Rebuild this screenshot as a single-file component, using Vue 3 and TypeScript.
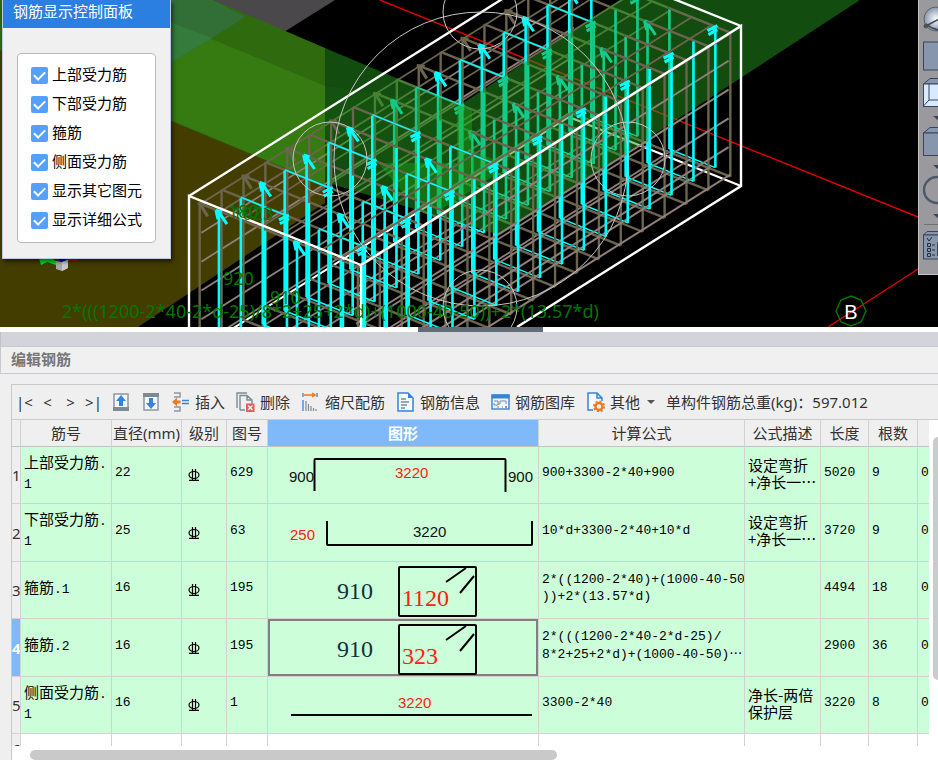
<script setup lang="ts">
import { ref } from 'vue'

interface Seg { x1: number; y1: number; x2: number; y2: number }
interface Layer { taupe: Seg[]; cyan: Seg[]; thin: Seg[]; hooks: string[]; grayHooks: string[]; knots: string[] }

const options = ref([
  { label: '上部受力筋', on: true },
  { label: '下部受力筋', on: true },
  { label: '箍筋', on: true },
  { label: '侧面受力筋', on: true },
  { label: '显示其它图元', on: true },
  { label: '显示详细公式', on: true },
])

/* Projection of the beam: u runs along it, v across it, h is the drop from the top face. */
function pt(u: number, v: number, h: number): [number, number] {
  return [189 + 380 * u + 172 * v, 196 - 239 * u + 69 * v + h]
}
function seg(a: [number, number], b: [number, number]): Seg {
  return { x1: a[0], y1: a[1], x2: b[0], y2: b[1] }
}

const TOP = 7
const BOTTOM = 151
const FRAMES = 18
const OUTER = [0.04, 0.96]
const INNER = [[0.152, 0.42], [0.606, 0.873]]
const station = (i: number) => 0.01 + (i * 0.98) / (FRAMES - 1)

function emptyLayer(): Layer {
  return { taupe: [], cyan: [], thin: [], hooks: [], grayHooks: [], knots: [] }
}
const far = emptyLayer()
const near = emptyLayer()

for (let i = 0; i < FRAMES; i++) {
  const u = station(i)
  const pick = (v: number) => (i >= 8 && v < 0.65 ? far : near)
  for (const v of OUTER) pick(v).taupe.push(seg(pt(u, v, TOP), pt(u, v, BOTTOM)))
  pick(0.04).taupe.push(seg(pt(u, 0.04, TOP), pt(u, 0.6, TOP)))
  near.taupe.push(seg(pt(u, 0.6, TOP), pt(u, 0.96, TOP)))
  pick(0.04).taupe.push(seg(pt(u, 0.04, BOTTOM), pt(u, 0.6, BOTTOM)))
  near.taupe.push(seg(pt(u, 0.6, BOTTOM), pt(u, 0.96, BOTTOM)))
  for (const [a, b] of INNER) {
    pick(a).cyan.push(seg(pt(u, a, TOP + 1), pt(u, a, BOTTOM - 3)))
    pick(b).cyan.push(seg(pt(u, b, TOP + 1), pt(u, b, BOTTOM - 3)))
    pick(a).thin.push(seg(pt(u, a, BOTTOM - 3), pt(u, b, BOTTOM - 3)))
    if (i % 2 === 0) {
      const [x, y] = pt(u, a, TOP + 1)
      pick(a).hooks.push(`M${x - 3} ${y - 2}l2 9M${x - 3} ${y - 2}l6 2M${x} ${y}l8 12`)
    } else {
      pick(a).thin.push(seg(pt(u, a, TOP), pt(u, b, TOP)))
      const [x, y] = pt(u, b, TOP + 1)
      pick(b).knots.push(`M${x - 8} ${y + 3}l10 -5M${x - 7} ${y + 7}l9 -5M${x - 3} ${y - 1}l3 5`)
    }
  }
  if (i % 2 === 0) {
    const [x, y] = pt(u, 0.04, TOP)
    pick(0.04).grayHooks.push(`M${x - 2} ${y}l8 1M${x} ${y}l8 13`)
  }
}

const farBars: Seg[] = []
const nearBars: Seg[] = []
const topBars: Seg[] = []
for (let k = 0; k < 9; k++) {
  const v = 0.04 + k * 0.115
  topBars.push(seg(pt(0.01, v, TOP + 1), pt(0.99, v, TOP + 1)))
  const target = k < 6 ? farBars : nearBars
  target.push(seg(pt(0.01, v, BOTTOM - 2), pt(0.99, v, BOTTOM - 2)))
}
for (let k = 1; k <= 4; k++) {
  const h = TOP + (k * (BOTTOM - TOP)) / 5
  farBars.push(seg(pt(0.01, 0.05, h), pt(0.99, 0.05, h)))
  nearBars.push(seg(pt(0.01, 0.95, h), pt(0.99, 0.95, h)))
}

const orbitKnobs = [[480, 12], [330, 159], [628, 159], [480, 307]]

interface Row {
  name: string; no: string; dia: string; fig: string; shape: string; span: string
  formula: string[]; more?: boolean; desc: string[]; len: string; count: string
}
const rows: Row[] = [
  { name: '上部受力筋', no: '1', dia: '22', fig: '629', shape: 'down', span: '3220', formula: ['900+3300-2*40+900'], desc: ['设定弯折', '+净长一…'], len: '5020', count: '9' },
  { name: '下部受力筋', no: '1', dia: '25', fig: '63', shape: 'up', span: '3220', formula: ['10*d+3300-2*40+10*d'], desc: ['设定弯折', '+净长一…'], len: '3720', count: '9' },
  { name: '箍筋', no: '1', dia: '16', fig: '195', shape: 'hoop', span: '1120', formula: ['2*((1200-2*40)+(1000-40-50', '))+2*(13.57*d)'], desc: [], len: '4494', count: '18' },
  { name: '箍筋', no: '2', dia: '16', fig: '195', shape: 'hoop', span: '323', formula: ['2*(((1200-2*40-2*d-25)/', '8*2+25+2*d)+(1000-40-50)'], more: true, desc: [], len: '2900', count: '36' },
  { name: '侧面受力筋', no: '1', dia: '16', fig: '1', shape: 'bar', span: '3220', formula: ['3300-2*40'], desc: ['净长-两倍', '保护层'], len: '3220', count: '8' },
]
const selected = ref(3)
</script>

<template>
  <main class="app" lang="zh-CN">
    <section class="view">
      <svg class="scene" viewBox="0 0 938 327" preserveAspectRatio="xMinYMin slice" aria-hidden="true">
        <rect width="938" height="327" fill="#000" />
        <polygon points="0,0 335,0 284,32 0,150" fill="#4a484b" />
        <polygon points="0,50 180,122 325,182 325,203 138,327 0,327" fill="#443d00" />
        <polygon points="100,0 213,0 325,48 325,185 0,50 0,0" fill="#2f6b0e" />
        <polygon points="100,0 180,26 325,86 325,185 100,90" fill="#357b12" />
        <polygon points="100,0 213,0 245,17 212,38 180,57 100,100" fill="#316f36" />
        <polygon points="115,0 180,26 212,38 180,57 100,105" fill="#357c3c" />
        <path d="M380 0L918 217M828 327L918 269" stroke="#e00000" stroke-width="1.4" />
        <path d="M569 -43L569 117L741 186M569 117L189 356" fill="none" stroke="#fff" stroke-width="2" />

        <g stroke="#8f7f79" stroke-width="1.8">
          <line v-for="(s, i) in farBars" :key="i" v-bind="s" />
        </g>
        <g stroke="#6b654e" stroke-width="2.4">
          <line v-for="(s, i) in far.taupe" :key="i" v-bind="s" />
        </g>
        <g stroke="#6f6450" stroke-width="1.8">
          <line v-for="(s, i) in topBars.slice(0, 6)" :key="i" v-bind="s" />
        </g>
        <g stroke="#00ffff" stroke-width="1.5">
          <line v-for="(s, i) in far.thin" :key="i" v-bind="s" />
        </g>
        <g stroke="#00ffff" stroke-width="2.6">
          <line v-for="(s, i) in far.cyan" :key="i" v-bind="s" />
        </g>
        <path :d="far.grayHooks.join('')" stroke="#6b654e" stroke-width="3" />
        <path :d="far.hooks.join('') + far.knots.join('')" stroke="#00ffff" stroke-width="3" />

        <polygon points="325,48 460,105 620,0 860,0 500,235 325,182" fill="rgb(36 154 30 / 0.5)" />
        <polygon points="455,104 472,110 472,131 500,143 500,160 452,189 420,178 395,166 380,160 325,137 325,86" fill="rgb(36 154 30 / 0.08)" />
        <polygon points="457,105 472,110 472,150 495,160 495,175 460,198 440,210 405,195 378,163 457,163" fill="rgb(30 170 30 / 0.4)" />

        <g stroke="#6b654e" stroke-width="2.4">
          <line v-for="(s, i) in near.taupe" :key="i" v-bind="s" />
        </g>
        <g stroke="#8f7f79" stroke-width="2">
          <line v-for="(s, i) in nearBars" :key="i" v-bind="s" />
        </g>
        <g stroke="#00ffff" stroke-width="1.5">
          <line v-for="(s, i) in near.thin" :key="i" v-bind="s" />
        </g>
        <g stroke="#00ffff" stroke-width="2.6">
          <line v-for="(s, i) in near.cyan" :key="i" v-bind="s" />
        </g>
        <g stroke="#6f6450" stroke-width="1.8">
          <line v-for="(s, i) in topBars.slice(6)" :key="i" v-bind="s" />
        </g>
        <path :d="near.grayHooks.join('')" stroke="#6b654e" stroke-width="3" />
        <path :d="near.hooks.join('') + near.knots.join('')" stroke="#00ffff" stroke-width="3" />

        <path d="M189 327V196L361 265L741 26V186L517 327M361 265V327M189 196L569 -43L741 26" fill="none" stroke="#fff" stroke-width="2.4" />
        <g fill="none" stroke="#c4c4c4" stroke-width="1">
          <circle cx="481" cy="159" r="147" />
          <circle v-for="(c, i) in orbitKnobs" :key="i" :cx="c[0]" :cy="c[1]" r="37" />
        </g>

        <g class="dims">
          <text x="62" y="318">2*(((1200-2*40-2*d-25)/8*2+25+2*d)+(1000-40-50))+2*(13.57*d)</text>
          <text x="223" y="285">920</text>
          <text x="270" y="304">910</text>
          <text x="228" y="218">180</text>
          <text x="232" y="220">1023</text>
        </g>
        <polygon points="851,296 861,300 866,311 861,322 851,326 841,322 836,311 841,300" fill="none" stroke="#007a00" stroke-width="1.4" />
        <text class="axis" x="851" y="319">B</text>

        <path d="M39 258h12l5 3v4l-9-3l-6 3z" fill="#00e820" />
        <path d="M66 257h15l-5 4l-10-1z" fill="#e80000" />
        <path d="M59 256h6v6h-6z" fill="#0000d0" />
        <path d="M56 261l6 1l6-2v8l-6 3l-6-2z" fill="#a8a8a8" />
        <path d="M62 262l6-2v8l-6 3z" fill="#c8c8c8" />
      </svg>

      <form class="panel">
        <h2>钢筋显示控制面板</h2>
        <fieldset>
          <label v-for="o in options" :key="o.label">
            <input v-model="o.on" type="checkbox" />
            <span>{{ o.label }}</span>
          </label>
        </fieldset>
      </form>

      <nav class="side">
        <button type="button" class="short" aria-label="动态观察">
          <svg viewBox="0 0 20 36">
            <defs><radialGradient id="ball"><stop offset="0" stop-color="#fff" /><stop offset="1" stop-color="#8796ad" /></radialGradient></defs>
            <circle cx="17" cy="19" r="12" fill="url(#ball)" stroke="#59616c" />
            <path d="M5 27L20 19M7 24q6 5 13 6" fill="none" stroke="#3f4a58" stroke-width="1.600" /><circle cx="7" cy="26" r="2" fill="none" stroke="#4a4a4a" />
          </svg>
        </button>
        <button type="button" class="short" aria-label="俯视">
          <svg viewBox="0 0 20 36"><rect x="4.500" y="6" width="30" height="28" fill="#8796ad" stroke="#39465a" /></svg>
        </button>
        <button type="button" class="tall" aria-label="线框">
          <svg viewBox="0 0 20 49">
            <path d="M4.500 12L11 6.500H20V12z" fill="#8796ad" stroke="#39465a" />
            <rect x="4.500" y="12" width="30" height="22.500" fill="#d8eaff" stroke="#39465a" />
            <path d="M10 12V28H20M4.500 34L10 28" fill="none" stroke="#39465a" /><path d="M14 44H20V49z" fill="#39465a" />
          </svg>
        </button>
        <button type="button" class="tall" aria-label="实体">
          <svg viewBox="0 0 20 49">
            <path d="M4.500 12L11 6.500H20V12z" fill="#8796ad" stroke="#39465a" />
            <rect x="4.500" y="12" width="30" height="22.500" fill="#8796ad" stroke="#39465a" />
            <path d="M14 44H20V49z" fill="#39465a" />
          </svg>
        </button>
        <button type="button" class="tall" aria-label="旋转">
          <svg viewBox="0 0 20 49"><circle cx="18" cy="20" r="13" fill="none" stroke="#4d5866" stroke-width="2.400" /><path d="M14 44H20V49z" fill="#39465a" /></svg>
        </button>
        <button type="button" class="tall" aria-label="显示设置">
          <svg viewBox="0 0 20 49">
            <path d="M5 5.500H20" stroke="#6f6f6f" />
            <path d="M4.500 16L8 12.500H20V16z" fill="#8796ad" stroke="#39465a" /><rect x="4.500" y="16" width="30" height="24" fill="#8796ad" stroke="#39465a" />
            <path d="M8 19l2 3l3-4M8.500 24.500h3v3h-3zM8.500 29.500h3v3h-3zM8.500 34.500h3v3h-3zM13 26h3M13 31h3M13 36h3" fill="none" stroke="#252f3c" />
            <path d="M18 23h2v14h-2z" fill="#39465a" />
          </svg>
        </button>
      </nav>
    </section>

    <div class="splitter"><i></i></div>
    <div class="strip"></div>

    <section class="editor">
      <h1>编辑钢筋</h1>
      <div class="frame">
        <div class="tools">
          <button type="button" class="step">|&lt;</button>
          <button type="button" class="step">&lt;</button>
          <button type="button" class="step">&gt;</button>
          <button type="button" class="step">&gt;|</button>
          <button type="button" class="move" aria-label="上移">
            <svg viewBox="0 0 16 18"><rect x="1" y="1" width="14" height="16" fill="#f4f7fa" stroke="#8c98a2" stroke-width="1.500" /><path d="M0 14h16v4H0z" fill="#7d8b95" /><path d="M8 2L13 8H10V13H6V8H3z" fill="#3584dc" /></svg>
          </button>
          <button type="button" class="move" aria-label="下移">
            <svg viewBox="0 0 16 18"><rect x="1" y="1" width="14" height="16" fill="#f4f7fa" stroke="#8c98a2" stroke-width="1.500" /><path d="M0 0h16v4H0z" fill="#7d8b95" /><path d="M8 16L13 10H10V5H6V10H3z" fill="#3584dc" /></svg>
          </button>
          <button type="button" class="tool">
            <svg viewBox="0 0 19 20"><path d="M3 1h6v4H3M3 15h6v4H3" fill="none" stroke="#8c98a2" stroke-width="1.500" /><path d="M1 10L6 5.500V8.500H9.500V11.500H6V14.500z" fill="#f07820" /><path d="M11 8.500h7M11 11.500h7" stroke="#3584dc" stroke-width="1.600" /></svg>
            <span>插入</span>
          </button>
          <button type="button" class="tool">
            <svg viewBox="0 0 19 20"><path d="M1 16V1H11M4 18V3.500H11L16 8V12M11 3.500V8H16M4 18H9" fill="none" stroke="#7d8b95" stroke-width="1.400" /><rect x="10" y="11.500" width="8.500" height="8.500" fill="#e05c5c" /><path d="M12 13.500l4.500 4.500M16.500 13.500L12 18" stroke="#fff" stroke-width="1.200" /></svg>
            <span>删除</span>
          </button>
          <button type="button" class="tool">
            <svg viewBox="0 0 19 20"><path d="M2 1v4M16 1v4M2 8v11" stroke="#3584dc" stroke-width="1.300" /><path d="M3 3h10M11 1l3 2l-3 2" fill="none" stroke="#f07820" stroke-width="1.500" /><path d="M5 9v10M7.500 12v7M10 14v5M12.500 16v3M15 17v2" stroke="#7d8b95" stroke-width="1.200" /></svg>
            <span>缩尺配筋</span>
          </button>
          <button type="button" class="tool">
            <svg viewBox="0 0 19 20"><path d="M2 1H12L17 6V19H2z" fill="#f4faff" stroke="#3584dc" stroke-width="1.500" /><path d="M12 1V6H17z" fill="#3584dc" /><path d="M5 7h5M5 10h8M5 13h6" stroke="#7d8b95" stroke-width="1.300" /><path d="M5 16h4" stroke="#3584dc" stroke-width="1.300" /></svg>
            <span>钢筋信息</span>
          </button>
          <button type="button" class="tool">
            <svg viewBox="0 0 19 20"><rect x="1" y="3" width="17" height="14" fill="#eef6ff" stroke="#3584dc" stroke-width="1.400" /><path d="M.5 2.500h18v4H.5z" fill="#3584dc" /><path d="M3 9h4v4H3V11M7 12H9V9H15V12" fill="none" stroke="#7d8b95" /><path d="M6 15h2M11 15h1" stroke="#f0a030" stroke-width="1.400" /><path d="M14 15h2" stroke="#e05050" stroke-width="1.400" /></svg>
            <span>钢筋图库</span>
          </button>
          <button type="button" class="tool">
            <svg viewBox="0 0 19 20"><path d="M7 18H2V1H11L16 6V9M11 1V6H16" fill="#f4faff" stroke="#3584dc" stroke-width="1.500" /><circle cx="13" cy="14.500" r="3.500" fill="none" stroke="#f07820" stroke-width="2.400" /><circle cx="13" cy="14.500" r="5" fill="none" stroke="#f07820" stroke-width="2" stroke-dasharray="2 1.900" /></svg>
            <span>其他</span>
            <i class="caret"></i>
          </button>
          <output class="total">单构件钢筋总重(kg)：597.012</output>
        </div>

        <div class="grid">
          <div class="clip">
            <table>
              <colgroup>
                <col class="c-no" /><col class="c-name" /><col class="c-dia" /><col class="c-level" /><col class="c-fig" /><col class="c-shape" />
                <col /><col class="c-desc" /><col class="c-len" /><col class="c-count" /><col class="c-last" />
              </colgroup>
              <thead>
                <tr>
                  <th></th><th>筋号</th><th>直径(mm)</th><th>级别</th><th>图号</th><th class="active">图形</th>
                  <th>计算公式</th><th>公式描述</th><th>长度</th><th>根数</th><th></th>
                </tr>
              </thead>
              <tbody>
                <tr v-for="(r, i) in rows" :key="i" @click="selected = i">
                  <th scope="row" :class="{ active: i === selected }">{{ i + 1 }}</th>
                  <td class="cjk">{{ r.name }}<span class="mono">.<br v-if="r.name.length > 2" />{{ r.no }}</span></td>
                  <td>{{ r.dia }}</td>
                  <td class="level">
                    <svg viewBox="0 0 12 12" role="img" aria-label="HRB400"><ellipse cx="6" cy="6" rx="5" ry="3.500" fill="none" stroke="#000" stroke-width="1.200" /><path d="M4.500 0V11M7.500 0V11M1 11.300H11" stroke="#000" stroke-width="1.200" /></svg>
                  </td>
                  <td>{{ r.fig }}</td>
                  <td class="shape" :class="{ focus: i === selected }">
                    <svg v-if="r.shape === 'down'" viewBox="0 0 270 56">
                      <path d="M46.500 44V13Q46.500 12 47.500 12H236.500Q237.500 12 237.500 13V45" />
                      <text x="21" y="35">900</text><text x="240" y="35">900</text><text class="red" x="127" y="31">{{ r.span }}</text>
                    </svg>
                    <svg v-else-if="r.shape === 'up'" viewBox="0 0 270 56">
                      <path d="M59 16V39Q59 40 60 40H263Q264 40 264 39V16" />
                      <text class="red" x="22" y="35">250</text><text x="145" y="32">{{ r.span }}</text>
                    </svg>
                    <svg v-else-if="r.shape === 'hoop'" viewBox="0 0 270 56">
                      <rect x="131" y="5" width="77" height="49" rx="1" />
                      <path d="M178 20L198 6M192 31L206 14" />
                      <text class="big" x="69" y="37">910</text><text class="big red" x="134" y="44">{{ r.span }}</text>
                    </svg>
                    <svg v-else viewBox="0 0 270 56">
                      <path d="M23 38H264" /><text class="red" x="130" y="31">{{ r.span }}</text>
                    </svg>
                  </td>
                  <td><span v-for="(line, n) in r.formula" :key="n" class="line">{{ line }}<span v-if="r.more && n === r.formula.length - 1" class="dots">⋯</span></span></td>
                  <td class="cjk"><span v-for="line in r.desc" :key="line" class="line">{{ line }}</span></td>
                  <td>{{ r.len }}</td>
                  <td>{{ r.count }}</td>
                  <td>0</td>
                </tr>
                <tr class="blank"><th scope="row">6</th><td v-for="n in 10" :key="n"></td></tr>
              </tbody>
            </table>
          </div>
          <div class="vbar"><i></i></div>
          <div class="hbar"><i></i></div>
        </div>
      </div>
    </section>
  </main>
</template>

<style>
body { margin: 0; background: #efefef; overflow: hidden; }
</style>

<style scoped>
* { box-sizing: border-box; }
.app { height: 100vh; display: flex; flex-direction: column; overflow: hidden; font: 15px/20px "Noto Sans", "Noto Sans CJK SC", sans-serif; color: #333; background: #efefef; }
button { margin: 0; padding: 0; border: 0; background: none; font: inherit; color: inherit; display: flex; align-items: center; }
.view { position: relative; flex: none; height: 327px; overflow: hidden; background: #000; }
.scene { display: block; width: 100%; height: 100%; }
.dims { fill: #007800; font: 18px "Noto Sans", sans-serif; }
.axis { fill: #fff; font: 20px "Liberation Sans", sans-serif; text-anchor: middle; }

.panel { position: absolute; left: 2px; top: 0; width: 169px; padding-bottom: 15px; background: #f0f0f0; border: 1px solid #b9cbdd; border-top: 0; box-shadow: 2px 3px 4px rgb(0 0 0 / 0.5); }
.panel h2 { margin: 0 0 25px; height: 28px; padding-left: 10px; background: #2b7fe1; color: #fff; font-size: 15px; font-weight: 400; line-height: 22px; }
.panel fieldset { margin: 0 14px; padding: 7px 0 7px 13px; border: 1px solid #b9b9b9; border-radius: 4px; background: #fff; }
.panel label { display: flex; align-items: center; gap: 4px; height: 29px; color: #000; white-space: nowrap; line-height: 17px; }
.panel label span { height: 20px; }
.panel input { appearance: none; flex: none; width: 17px; height: 17px; margin: 0; border-radius: 2px; background: #55a0fb; display: grid; place-items: center; }
.panel input:checked::after { content: ""; width: 9px; height: 5px; border: solid #fff; border-width: 0 0 2px 2px; transform: translateY(-1px) rotate(-45deg); }

.side { position: absolute; right: 0; top: 0; width: 20px; height: 275px; overflow: hidden; background: #9a9a9e; border: solid #c4c4c4; border-width: 0 0 1px 1px; }
.side svg { display: block; width: 20px; }
.side .short, .side .short svg { height: 36px; }
.side .tall, .side .tall svg { height: 49px; }

.splitter { flex: none; height: 5px; padding-left: 23px; background: #fff; display: flex; justify-content: center; }
.splitter i { width: 125px; height: 5px; background: #626c78; }
.strip { flex: none; height: 14px; background: #d3d4d9; border-left: 1px solid #bfc3c8; }
.editor { flex: 1; min-height: 0; display: flex; flex-direction: column; }
.editor h1 { flex: none; margin: 0; height: 28px; padding-left: 10px; border: solid #c6cace; border-width: 1px 0 1px 1px; background: #f0f0f0; color: #777; font-size: 15px; font-weight: 700; line-height: 25px; }
.frame { flex: 1; min-height: 0; margin: 10px 0 0 11px; border: solid #c6c9cc; border-width: 1px 0 0 1px; display: flex; flex-direction: column; }
.tools { flex: none; display: flex; align-items: center; height: 34px; padding-left: 1px; white-space: nowrap; }
.step { width: 23px; height: 24px; justify-content: center; font-size: 15px; }
.move { width: 30px; height: 24px; justify-content: center; }
.move svg { width: 16px; height: 18px; }
.tool { gap: 5px; margin-right: 11px; height: 24px; }
.tool svg { width: 19px; height: 20px; }
.step + .move { margin-left: 1px; }
.move + .tool { margin-left: 5px; }
.caret { border: 4px solid transparent; border-top-color: #555; border-bottom: 0; margin-left: 2px; }

.grid { flex: 1; min-height: 0; display: grid; grid-template-columns: minmax(0, 1fr) 9px; grid-template-rows: minmax(0, 1fr) 14px; background: #fff; border-top: 1px solid #c9cbcd; }
.clip { overflow: hidden; }
.vbar { overflow: hidden; padding: 17px 0 0 4px; }
.vbar i { display: block; width: 12px; height: 243px; border-radius: 5px; background: #cbcbcb; }
.hbar { grid-column: 1 / 3; padding: 4px 0 0 18px; overflow: hidden; }
.hbar i { display: block; width: 58%; height: 10px; border-radius: 5px; background: #c9c9c9; }
table { width: 100%; table-layout: fixed; border-collapse: separate; border-spacing: 0; }
.c-no { width: 9px; }
.c-name { width: 91px; }
.c-dia { width: 70px; }
.c-level { width: 45px; }
.c-fig { width: 41px; }
.c-shape { width: 271px; }
.c-desc { width: 76px; }
.c-len { width: 48px; }
.c-count { width: 49px; }
.c-last { width: 11px; }
th, td { padding: 0; border: solid #d0d2d3; border-width: 0 1px 1px 0; overflow: hidden; white-space: nowrap; }
th { background: #efefef; font-weight: 400; text-align: center; }
th.active { background: #80b9fa; color: #fff; font-weight: 700; }
th:last-child, td:last-child { border-right: 0; }
thead th { height: 27px; border-bottom-color: #bdc5c1; }
tbody tr { height: 57px; }
tbody tr:nth-child(even) { height: 58px; }
td { background: #ccffd9; padding: 0 0 5px 3px; color: #000; font: 13px/17px "Liberation Mono", "Noto Sans CJK SC", monospace; }
td.cjk { font-family: "Noto Sans CJK SC", sans-serif; font-size: 15px; }
.mono { font: 13px/17px "Liberation Mono", monospace; }
.dots { font-family: "Noto Sans CJK SC", sans-serif; line-height: 16px; }
.line { display: block; height: 17px; }
td.level { padding: 0 0 0 6px; }
.level svg { display: block; width: 12px; height: 12px; }
td.shape { padding: 0; }
.shape svg { display: block; width: 270px; height: 56px; }
.shape path, .shape rect { fill: none; stroke: #000; stroke-width: 2; }
.shape text { fill: #111; font: 15px "Liberation Sans", sans-serif; }
.shape .big { fill: #10323c; font: 24px "Liberation Serif", serif; }
.shape .red { fill: #ff2010; }
td.focus { box-shadow: inset 0 0 0 2px #808080; }
tbody tr.blank { height: 30px; }
.blank td { background: #fff; }
</style>
